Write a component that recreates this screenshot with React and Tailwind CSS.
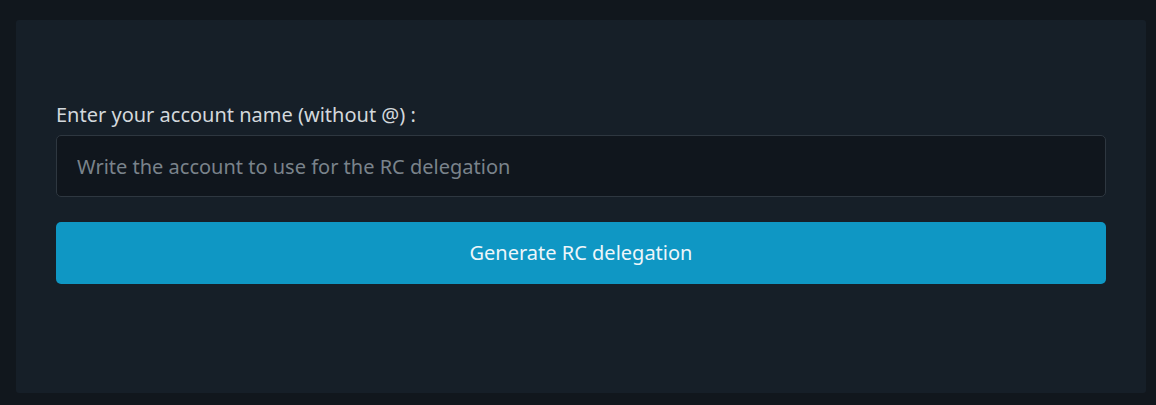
import React, { useState } from "react";

export default function App() {
  const [account, setAccount] = useState("");

  return (
    <div
      className="min-h-[405px] bg-[#11171d] pt-[20px] pb-[12px] pl-[16px] pr-[10px]"
      style={{ fontFamily: '"Noto Sans", "Open Sans", sans-serif' }}
    >
      <div className="h-[373px] rounded-[3px] bg-[#161f28] px-[40px] pt-[80px]">
        <label className="block text-[20px] leading-[30px] text-[#d3d8dc] mb-[5px]">
          Enter your account name (without @) :
        </label>
        <input
          type="text"
          value={account}
          onChange={(e) => setAccount(e.target.value)}
          placeholder="Write the account to use for the RC delegation"
          className="block w-full h-[62px] rounded-[5px] border border-[#2e3740] bg-[#10161d] px-[20px] text-[20px] text-[#d3d8dc] placeholder:text-[#7a838b] outline-none"
        />
        <button className="mt-[25px] w-full h-[62px] rounded-[5px] bg-[#0f97c4] text-[20px] text-[#eef6fa]">
          Generate RC delegation
        </button>
      </div>
    </div>
  );
}
